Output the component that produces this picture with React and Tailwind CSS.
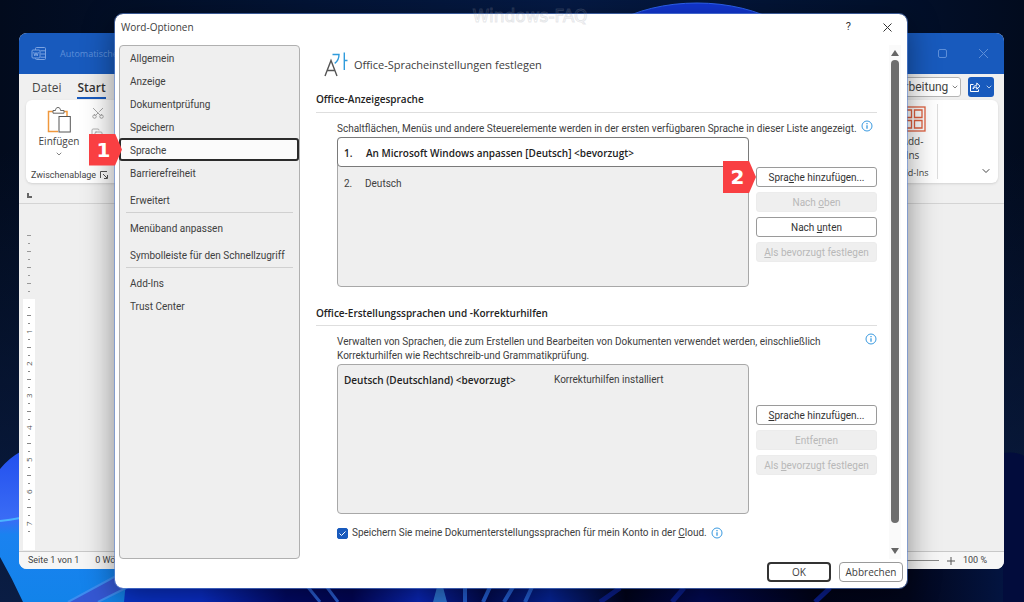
import { ChevronDown, Scissors, Copy } from "lucide-react";

const dialogSans = "font-['Roboto','Noto_Sans',sans-serif]";
const titleSans = "font-['Open_Sans','Noto_Sans',sans-serif]";

function Wallpaper() {
  return (
    <svg className="absolute inset-0 size-full" viewBox="0 0 1024 602" preserveAspectRatio="none" aria-hidden="true">
      <defs>
        <linearGradient id="sky" x1="0" y1="0" x2="1" y2="0">
          <stop offset="0" stopColor="#020b1d" />
          <stop offset="0.3" stopColor="#031436" />
          <stop offset="0.55" stopColor="#051a45" />
          <stop offset="0.85" stopColor="#02112e" />
          <stop offset="1" stopColor="#020b1e" />
        </linearGradient>
        <linearGradient id="lower" x1="0" y1="0" x2="0" y2="1">
          <stop offset="0" stopColor="#0a1c40" stopOpacity="0" />
          <stop offset="1" stopColor="#0a1d44" />
        </linearGradient>
        <linearGradient id="petal" x1="0" y1="0" x2="0" y2="1">
          <stop offset="0" stopColor="#2350ee" />
          <stop offset="0.45" stopColor="#3a6cf5" />
          <stop offset="0.55" stopColor="#1a82f0" />
          <stop offset="1" stopColor="#1283ea" />
        </linearGradient>
        <linearGradient id="floor" x1="0" y1="0" x2="1" y2="0">
          <stop offset="0" stopColor="#0a3bd0" />
          <stop offset="0.15" stopColor="#0a2fd0" />
          <stop offset="0.24" stopColor="#020a6a" />
          <stop offset="0.31" stopColor="#02065a" />
          <stop offset="0.38" stopColor="#0a28c0" />
          <stop offset="0.45" stopColor="#020a50" />
          <stop offset="0.52" stopColor="#0626a0" />
          <stop offset="0.6" stopColor="#01031c" />
          <stop offset="0.68" stopColor="#020a58" />
          <stop offset="0.8" stopColor="#01031a" />
          <stop offset="0.9" stopColor="#02061c" />
          <stop offset="1" stopColor="#031440" />
        </linearGradient>
      </defs>
      <rect width="1024" height="602" fill="url(#sky)" />
      <rect y="150" width="1024" height="452" fill="url(#lower)" />
      <ellipse cx="697" cy="72" rx="118" ry="69" fill="#1236d2" stroke="#2d62f0" />
      <path d="M1003 453 Q1016 451 1024 456 V602 H900 Z" fill="#020c3c" />
      <path d="M60 560 H1003 V602 H60 Z" fill="url(#floor)" />
      <path d="M0 469 Q9 458 20 452 L130 540 L124 602 H23 Q12 578 0 557 Z" fill="url(#petal)" />
      <path d="M0 521 Q10 520 20 518" stroke="#4ab4ff" strokeWidth="2" fill="none" />
      <path d="M68 602 L114 577 L126 589 L98 602 Z" fill="#3558d4" />
      <path d="M68 602 L116 576 M98 602 L128 587" stroke="#3d8df0" strokeWidth="2" fill="none" />
      <path d="M307 586 L320 602 M326 586 L338 602" stroke="#2a5fd8" strokeWidth="3" fill="none" />
      <path d="M437 587 L433 602 H447 L443 587 Z" fill="#2e78dc" />
      <path d="M465 587 V602 M490 587 L483 602 M513 587 L504 602 M532 587 L525 602" stroke="#2460d8" strokeWidth="4" fill="none" />
      <path d="M620 588 L600 602 M684 588 L672 602 M830 588 L815 602" stroke="#0a1f90" strokeWidth="5" fill="none" />
    </svg>
  );
}

function WordLogo() {
  return (
    <svg className="size-4" viewBox="0 0 16 16" fill="none" stroke="#7ba3e2" aria-hidden="true">
      <path d="M4.500 4V2.500a1 1 0 0 1 1-1h8a1 1 0 0 1 1 1v10a1 1 0 0 1-1 1h-8a1 1 0 0 1-1-1V12M9.500 4.800h5M9.500 8h5M9.500 11.200h5" />
      <rect x="1" y="4" width="8" height="8" rx="1" />
      <path d="m2.700 6 1.100 4L5 6.500 6.200 10l1.100-4" />
    </svg>
  );
}

function PasteIcon() {
  return (
    <svg className="h-7 w-6" viewBox="0 0 24 28" fill="none" aria-hidden="true">
      <path d="M6 5.500H1.500v20H11M17 5.500h3V10" stroke="#f0983c" strokeWidth="1.500" />
      <path d="M6 7.200V4.500h2.500C8.500 2.500 9.500 1.500 11 1.500s2.500 1 2.500 3H17v2.700z" fill="#fff" stroke="#666" />
      <rect x="12" y="10.500" width="11.300" height="15.500" fill="#fff" stroke="#555" />
    </svg>
  );
}

function LanguageIcon() {
  return (
    <svg className="h-[26px] w-6" viewBox="0 0 24 26" fill="none" strokeWidth="1.400" aria-hidden="true">
      <path d="M1 24 7 8.500 13 24M3.200 18.500h7.600" stroke="#555" />
      <path d="M8.500 2.500h6.500c0 4-1.500 7-4.300 8.800M20.300.5v17.500M20.300 8.500h3.200" stroke="#2f9bdc" />
    </svg>
  );
}

function InfoIcon() {
  return (
    <svg className="size-3 shrink-0" viewBox="0 0 12 12" fill="none" stroke="#3a9ae0" aria-hidden="true">
      <circle cx="6" cy="6" r="5" />
      <path d="M6 5.200v3.600M6 3v1.200" strokeWidth="1.300" />
    </svg>
  );
}

function AddInsIcon() {
  return (
    <svg className="size-[26px]" viewBox="0 0 26 26" fill="none" stroke="#e0603f" aria-hidden="true">
      <rect x="1" y="1" width="24" height="24" strokeWidth="1.300" />
      <path d="M4 4h7.500v7.500H4zM14.500 4H22v7.500h-7.500zM4 14.500h7.500V22H4zM14.500 14.500H22V22h-7.500z" strokeWidth="1.300" />
    </svg>
  );
}

function ShareIcon() {
  return (
    <svg className="size-3" viewBox="0 0 12 12" fill="none" stroke="#fff" aria-hidden="true">
      <path d="M4.500 3.500h-3v7h8V8.500M4 8c.3-2.500 1.500-3.700 3.800-3.800V2l3.200 3.200-3.200 3V6C6.200 6 5 6.500 4 8z" />
    </svg>
  );
}

const ticks = ["-", "·", "-", "·", "-", "·", "-", "·"];
const rulerNumbers = [1, 2, 3, 4, 5, 6, 7];

function VerticalRuler() {
  return (
    <svg className="absolute left-[4px] top-0 h-[346px] w-4" viewBox="0 0 16 346" aria-hidden="true">
      <rect x="0" y="95" width="12" height="251" fill="#fff" />
      {ticks.map((t, i) => (
        <rect key={i} x={t === "-" ? 4 : 5} y={31 + i * 8} width={t === "-" ? 4 : 2} height="1" fill="#999" />
      ))}
      {rulerNumbers.map((n, i) => (
        <g key={n} fill="#888">
          <text
            x="0"
            y="0"
            transform={`translate(9 ${130 + i * 32}) rotate(-90)`}
            fontSize="8"
            fontFamily="Open Sans, sans-serif"
            fill="#555"
          >
            {n}
          </text>
          <rect x="5" y={103 + i * 32} width="2" height="1" />
          <rect x="4" y={111 + i * 32} width="4" height="1" />
          <rect x="5" y={119 + i * 32} width="2" height="1" />
          <rect x="5" y={135 + i * 32} width="2" height="1" />
        </g>
      ))}
    </svg>
  );
}

function WordWindow() {
  return (
    <section
      aria-label="Word"
      className={`absolute bottom-[33px] left-[19px] right-[20px] top-[33px] flex flex-col overflow-hidden rounded-lg bg-[#f0f0f0] text-[#444] ${titleSans}`}
    >
      <header className="flex h-[41px] shrink-0 items-center justify-between bg-[#185abd] pl-3 pr-4 text-[#5d8fd9]">
        <div className="flex items-center gap-[13px]">
          <WordLogo />
          <span className="text-[9px]">Automatische</span>
        </div>
        <div className="flex items-center gap-8">
          <button type="button" aria-label="Maximieren" className="size-[9px] rounded-[2px] border border-[#5d8fd9]" />
          <button type="button" aria-label="Word schließen">
            <svg className="size-[9px]" viewBox="0 0 9 9" stroke="#5d8fd9" aria-hidden="true">
              <path d="m0 0 9 9M9 0 0 9" />
            </svg>
          </button>
        </div>
      </header>

      <div className="flex h-[26px] shrink-0 items-center justify-between pl-[13px] pr-2.5">
        <nav className="flex gap-4 pt-0.5 text-[12px] leading-[19px]">
          <a href="#datei">Datei</a>
          <a href="#start" className="border-b-2 border-[#185abd] font-semibold text-[#333]">Start</a>
        </nav>
        <div className="flex items-center gap-[7px]">
          <div className="relative flex items-center">
            <select
              aria-label="Modus"
              className={`h-5 w-[84px] appearance-none rounded-[3px] border border-[#b5b5b5] bg-white pl-1.5 pr-3 text-[12px] leading-4 text-[#444] ${dialogSans}`}
            >
              <option>Bearbeitung</option>
            </select>
            <ChevronDown className="pointer-events-none absolute right-0.5 size-2" />
          </div>
          <button type="button" aria-label="Freigeben" className="flex h-5 w-[26px] items-center justify-center gap-1 rounded-[3px] bg-[#185abd] text-white">
            <ShareIcon />
            <ChevronDown className="size-2" />
          </button>
        </div>
      </div>

      <div className="ml-[7px] mr-1.5 flex h-[83px] shrink-0 justify-between rounded-md bg-white shadow">
        <div className="flex w-[86px] flex-col justify-between pb-0.5 pl-[5px] pt-1.5">
          <div className="flex gap-3 pl-2">
            <button type="button" className="flex w-10 flex-col items-center text-[10px] leading-[14px]">
              <PasteIcon />
              <span>Einfügen</span>
              <ChevronDown className="mt-0.5 size-2" />
            </button>
            <div className="flex flex-col gap-2 text-[#999]">
              <Scissors className="size-3.5 -rotate-90" strokeWidth={1.5} />
              <Copy className="size-3" strokeWidth={1.5} />
              <span className="size-2 -rotate-45 bg-[#f0983c]" />
            </div>
          </div>
          <div className="flex items-center justify-between pr-1 font-['Roboto','Noto_Sans',sans-serif] text-[9px] leading-3">
            <span>Zwischenablage</span>
            <svg className="size-2" viewBox="0 0 8 8" fill="none" stroke="#555" aria-hidden="true">
              <path d="M.5 7V.5H7M3 3l4 4M7.500 4v3.500H4" />
            </svg>
          </div>
        </div>
        <div className="flex">
          <div className="my-1 flex w-[50px] flex-col items-center justify-between border-r border-[#ddd] pt-0.5 text-[10px] leading-[14px]">
            <button type="button" className="flex flex-col items-center">
              <AddInsIcon />
              <span className="pt-0.5">Add-</span>
              <span>Ins</span>
            </button>
            <span className="text-[9px] leading-3">Add-Ins</span>
          </div>
          <div className="flex w-[60px] items-end justify-end p-1.5">
            <ChevronDown className="size-3" strokeWidth={2} />
          </div>
        </div>
      </div>

      <div className="flex h-[21px] shrink-0 border-b border-[#d4d4d4] pl-2 pt-2.5">
        <span className="size-[5px] border-b-2 border-l-2 border-[#666]" />
      </div>
      <div className="relative flex min-h-0 flex-1 bg-[#efefef]">
        <VerticalRuler />
      </div>
      <footer className={`flex h-[18px] shrink-0 items-center justify-between border-t border-[#c8c8c8] bg-[#f6f6f6] pl-[9px] pr-[17px] text-[9px] ${dialogSans}`}>
        <div className="flex gap-4">
          <span>Seite 1 von 1</span>
          <span>0 Wörter</span>
        </div>
        <div className="flex items-center gap-2">
          <span className="h-px w-16 bg-[#888]" />
          <svg className="size-2" viewBox="0 0 8 8" stroke="#555" aria-hidden="true">
            <path d="M4 0v8M0 4h8" />
          </svg>
          <span>100 %</span>
        </div>
      </footer>
    </section>
  );
}

function Marker({ children, className }) {
  return (
    <span
      className={`pointer-events-none absolute top-1/2 z-10 flex h-8 w-[33px] -translate-y-1/2 items-center justify-center bg-[#f93f42] pr-1 font-['DejaVu_Sans',sans-serif] text-[20px] font-bold text-white [clip-path:polygon(0_0,79%_0,100%_50%,79%_100%,0_100%)] ${className}`}
    >
      {children}
    </span>
  );
}

function NavItem({ children, spaced, selected, marker }) {
  return (
    <li className={`relative ${spaced ? "mt-1" : ""}`}>
      <button
        type="button"
        aria-current={selected ? "page" : undefined}
        className={
          selected
            ? "-mx-px block h-[23px] w-[180px] rounded-[3px] border-2 border-[#2b2b2b] bg-[#fbfbfb] pl-[9px] pt-0.5 text-left"
            : "block h-[23px] w-full pl-2.5 pt-0.5 text-left"
        }
      >
        {children}
      </button>
      {marker && <Marker className="-left-[31px]">{marker}</Marker>}
    </li>
  );
}

function SideButton({ children, disabled, marker }) {
  return (
    <div className="relative">
      <button
        type="button"
        disabled={disabled}
        className="block h-5 w-full rounded-[3px] border border-[#9a9a9a] bg-white pt-px leading-4 text-[#333] disabled:border-[#ececec] disabled:bg-[#efefef] disabled:text-[#b8b8b8]"
      >
        {children}
      </button>
      {marker && <Marker className="-left-[33px]">{marker}</Marker>}
    </div>
  );
}

function SectionTitle({ children, className }) {
  return (
    <h2 className={`border-b border-[#dedede] text-[10px] font-semibold leading-4 text-[#222] ${titleSans} ${className}`}>
      {children}
    </h2>
  );
}

function OptionsDialog() {
  return (
    <section
      role="dialog"
      aria-labelledby="dialog-title"
      className={`absolute bottom-[14px] left-[115px] right-[117px] top-[14px] flex flex-col rounded-lg bg-white text-[10px] leading-[14px] text-[#404040] shadow-[0_8px_32px_rgba(0,0,0,0.45)] outline outline-[#5f88d8]/60 ${dialogSans}`}
    >
      <header className="flex h-[26px] shrink-0 items-center justify-between pl-1.5 pr-[15px]">
        <h1 id="dialog-title" className={titleSans}>Word-Optionen</h1>
        <div className="flex items-center gap-8">
          <button type="button" aria-label="Hilfe" className="text-[11px] text-[#333]">?</button>
          <button type="button" aria-label="Schließen">
            <svg className="size-[9px]" viewBox="0 0 9 9" stroke="#333" aria-hidden="true">
              <path d="m.5.5 8 8M8.500.5l-8 8" />
            </svg>
          </button>
        </div>
      </header>

      <div className="flex min-h-0 flex-1 pl-1 pr-1.5 pt-[5px]">
        <nav aria-label="Kategorien" className="w-[181px] shrink-0 rounded-[4px] border border-[#b0b0b0] bg-[#efefef]">
          <ul>
            <NavItem>Allgemein</NavItem>
            <NavItem>Anzeige</NavItem>
            <NavItem>Dokumentprüfung</NavItem>
            <NavItem>Speichern</NavItem>
            <NavItem selected marker="1">Sprache</NavItem>
            <NavItem>Barrierefreiheit</NavItem>
            <NavItem spaced>Erweitert</NavItem>
          </ul>
          <hr className="mx-1.5 mt-px border-[#d0d0d0]" />
          <ul className="pt-[3px]">
            <NavItem>Menüband anpassen</NavItem>
            <NavItem spaced>Symbolleiste für den Schnellzugriff</NavItem>
          </ul>
          <hr className="mx-1.5 mt-px border-[#d0d0d0]" />
          <ul className="pt-[3px]">
            <NavItem>Add-Ins</NavItem>
            <NavItem>Trust Center</NavItem>
          </ul>
        </nav>

        <main className="min-w-0 flex-1 pl-4 pr-3 pt-[7px]">
          <div className="flex items-center gap-1.5 pl-2">
            <LanguageIcon />
            <p className={`text-[11px] ${titleSans}`}>Office-Spracheinstellungen festlegen</p>
          </div>

          <SectionTitle className="mt-[13px] pb-[5px]">Office-Anzeigesprache</SectionTitle>
          <div className="pl-[21px] pt-[9px]">
            <div className="flex gap-1 whitespace-nowrap">
              <p>Schaltflächen, Menüs und andere Steuerelemente werden in der ersten verfügbaren Sprache in dieser Liste angezeigt.</p>
              <span className="-mt-0.5"><InfoIcon /></span>
            </div>
            <div className="flex gap-[7px] pt-px">
              <ol
                role="listbox"
                aria-label="Office-Anzeigesprache"
                className="h-[150px] flex-1 rounded-[4px] border border-[#a8a8a8] bg-[#efefef]"
              >
                <li
                  role="option"
                  aria-selected="true"
                  className={`-mx-px -mt-px flex h-[30px] items-center rounded-[4px] border border-[#7a7a7a] bg-white pl-1.5 pt-0.5 font-semibold text-[#222] ${titleSans}`}
                >
                  <span className="w-[22px]">1.</span>
                  <span>An Microsoft Windows anpassen [Deutsch] &lt;bevorzugt&gt;</span>
                </li>
                <li role="option" aria-selected="false" className="flex h-[30px] items-center pl-1.5 pt-[3px]">
                  <span className="w-[21px]">2.</span>
                  <span>Deutsch</span>
                </li>
              </ol>
              <div className="flex w-[121px] flex-col gap-[5px] pt-[30px]">
                <SideButton marker="2">Spra<u>c</u>he hinzufügen...</SideButton>
                <SideButton disabled>Nach <u>o</u>ben</SideButton>
                <SideButton>Nach <u>u</u>nten</SideButton>
                <SideButton disabled><u>A</u>ls bevorzugt festlegen</SideButton>
              </div>
            </div>
          </div>

          <SectionTitle className="mt-[18px] pb-1">Office-Erstellungssprachen und -Korrekturhilfen</SectionTitle>
          <div className="pl-[21px] pt-[9px]">
            <div className="flex justify-between">
              <p className="max-w-[500px]">
                Verwalten von Sprachen, die zum Erstellen und Bearbeiten von Dokumenten verwendet werden, einschließlich
                Korrekturhilfen wie Rechtschreib-und Grammatikprüfung.
              </p>
              <span className="-mt-0.5"><InfoIcon /></span>
            </div>
            <div className="flex gap-[7px] pt-px">
              <ul
                role="listbox"
                aria-label="Office-Erstellungssprachen"
                className="h-[150px] flex-1 rounded-[4px] border border-[#a8a8a8] bg-[#efefef]"
              >
                <li role="option" aria-selected="false" className="flex h-[30px] items-center pl-1.5">
                  <span className={`w-[210px] font-semibold text-[#222] ${titleSans}`}>Deutsch (Deutschland) &lt;bevorzugt&gt;</span>
                  <span>Korrekturhilfen installiert</span>
                </li>
              </ul>
              <div className="flex w-[121px] flex-col gap-[5px] pt-[41px]">
                <SideButton><u>S</u>prache hinzufügen...</SideButton>
                <SideButton disabled>Entfe<u>r</u>nen</SideButton>
                <SideButton disabled>Als <u>b</u>evorzugt festlegen</SideButton>
              </div>
            </div>
            <div className="flex items-center gap-1 pt-3">
              <span className="relative flex size-[11px]">
                <input
                  id="cloud"
                  type="checkbox"
                  defaultChecked
                  className="peer size-[11px] appearance-none rounded-[2px] border border-[#185abd] bg-white checked:bg-[#185abd]"
                />
                <svg className="pointer-events-none absolute inset-0 hidden size-[11px] peer-checked:block" viewBox="0 0 11 11" fill="none" stroke="#fff" aria-hidden="true">
                  <path d="m2.500 5.500 2 2 4-4" />
                </svg>
              </span>
              <label htmlFor="cloud">
                Speichern Sie meine Dokumenterstellungssprachen für mein Konto in der <u>C</u>loud.
              </label>
              <InfoIcon />
            </div>
          </div>
        </main>

        <div aria-hidden="true" className="flex w-3 shrink-0 flex-col items-center bg-[#fafafa] pb-[5px] pt-[5px]">
          <svg className="h-1.5 w-2" viewBox="0 0 8 6" fill="#666"><path d="M4 0 8 6H0z" /></svg>
          <div className="mt-1 h-[463px] w-2 rounded-full bg-[#6e6e6e]" />
          <svg className="mt-auto h-1.5 w-2" viewBox="0 0 8 6" fill="#666"><path d="M0 0h8L4 6z" /></svg>
        </div>
      </div>

      <footer className={`flex shrink-0 justify-end gap-2 pb-1.5 pr-1 pt-[3px] ${titleSans}`}>
        <button type="button" className="h-5 w-16 rounded-[4px] border-2 border-[#333] bg-white leading-4">OK</button>
        <button type="button" className="h-5 w-16 rounded-[4px] border border-[#9a9a9a] bg-white leading-4">Abbrechen</button>
      </footer>
    </section>
  );
}

export default function App() {
  return (
    <div className="relative h-screen min-h-[602px] overflow-hidden bg-[#03122e]">
      <Wallpaper />
      <WordWindow />
      <OptionsDialog />
      <span className="pointer-events-none absolute inset-x-0 top-1 pl-9 text-center font-['DejaVu_Sans',sans-serif] text-[17px] leading-6 text-transparent [-webkit-text-stroke:1px_rgba(150,155,165,0.25)]">
        Windows-FAQ
      </span>
    </div>
  );
}
